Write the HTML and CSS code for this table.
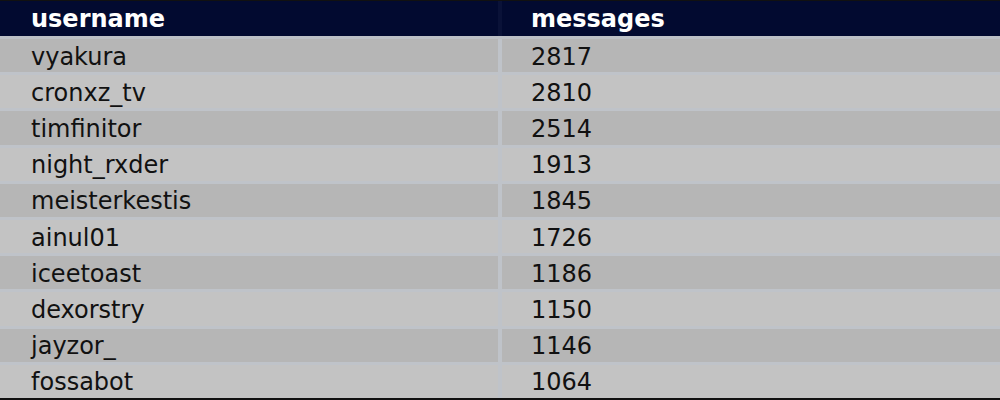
FILE: index.html
```html
<!DOCTYPE html>
<html>
<head>
<meta charset="utf-8">
<link rel="stylesheet" href="styles.css">
</head>
<body>
<div class="table">
  <div class="row-head">
    <div class="cell head">username</div><div class="cell head">messages</div>
  </div>
  <div class="rows">
    <div class="cell odd">vyakura</div><div class="cell odd">2817</div>
    <div class="cell even">cronxz_tv</div><div class="cell even">2810</div>
    <div class="cell odd">timfinitor</div><div class="cell odd">2514</div>
    <div class="cell even">night_rxder</div><div class="cell even">1913</div>
    <div class="cell odd">meisterkestis</div><div class="cell odd">1845</div>
    <div class="cell even">ainul01</div><div class="cell even">1726</div>
    <div class="cell odd">iceetoast</div><div class="cell odd">1186</div>
    <div class="cell even">dexorstry</div><div class="cell even">1150</div>
    <div class="cell odd">jayzor_</div><div class="cell odd">1146</div>
    <div class="cell even">fossabot</div><div class="cell even">1064</div>
  </div>
</div>
</body>
</html>
```
FILE: styles.css
```css
html, body {
  margin: 0;
  padding: 0;
  background: #111111;
}
body {
  width: 1000px;
  height: 400px;
  overflow: hidden;
  font-family: "DejaVu Sans", Verdana, sans-serif;
}
.table {
  margin-top: 1px;
  background: #bcc0c6;
}
.row-head {
  display: grid;
  grid-template-columns: 498px 498px;
  column-gap: 4px;
  height: 35px;
  background: #0a1238;
  border-bottom: 3px solid #bcc0c6;
}
.rows {
  display: grid;
  grid-template-columns: 498px 498px;
  grid-auto-rows: 33.2px;
  column-gap: 4px;
  row-gap: 3px;
  background: #bfc3c9;
}
.cell {
  display: flex;
  align-items: center;
  padding-left: 31px;
  font-size: 24px;
  color: #111111;
}
.cell:nth-child(2n) {
  padding-left: 29px;
}
.head {
  background: #020a30;
  color: #ffffff;
  font-weight: bold;
  padding-top: 1px;
}
.odd {
  background: #b6b6b6;
  padding-top: 2px;
}
.even {
  background: #c3c3c3;
  padding-top: 2px;
}
```
